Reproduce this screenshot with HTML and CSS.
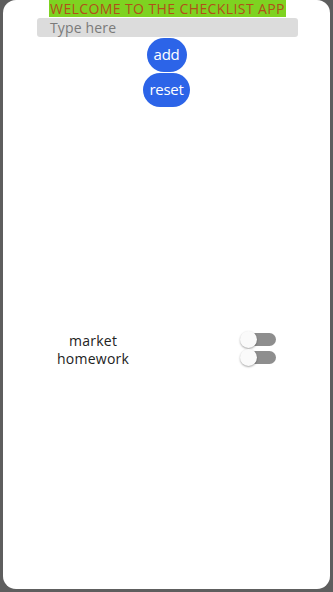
FILE: index.html
```html
<!DOCTYPE html>
<html>
<head>
<meta charset="utf-8">
<link rel="stylesheet" href="styles.css">
</head>
<body>
<div class="frame">
  <div class="card">
    <div class="title">WELCOME TO THE CHECKLIST APP</div>
    <div class="input">Type here</div>
    <div class="buttons">
      <div class="btn btn-add">add</div>
      <div class="btn btn-reset">reset</div>
    </div>
    <div class="list">
      <div class="rows">
        <div class="names">
          <div class="name">market</div>
          <div class="name">homework</div>
        </div>
        <div class="switches">
          <div class="switch"><div class="track"></div><div class="thumb"></div></div>
          <div class="switch"><div class="track"></div><div class="thumb"></div></div>
        </div>
      </div>
    </div>
  </div>
</div>
</body>
</html>
```
FILE: styles.css
```css
html, body {
  margin: 0;
  padding: 0;
  background: #5e5e5e;
}
.frame {
  width: 333px;
  height: 592px;
  padding: 0 3px 3px 3px;
  box-sizing: border-box;
  background: #5e5e5e;
}
.card {
  height: 589px;
  background: #ffffff;
  border-radius: 13px;
  display: flex;
  flex-direction: column;
  align-items: center;
  font-family: "Open Sans", "Noto Sans", sans-serif;
}
.title {
  background: #7ed321;
  color: #b0501a;
  font-size: 14px;
  line-height: 17px;
  padding: 0 1px;
  letter-spacing: 0.4px;
  white-space: nowrap;
  margin-left: 2px;
}
.input {
  margin-top: 1px;
  width: 261px;
  height: 19px;
  box-sizing: border-box;
  background: #dcdcdc;
  border-radius: 3px;
  padding-left: 13px;
  color: #7a7a7a;
  font-size: 14px;
  line-height: 19px;
  letter-spacing: 0.15px;
  margin-left: 2px;
}
.buttons {
  display: flex;
  flex-direction: column;
  align-items: center;
  margin-top: 1px;
}
.btn {
  background: #2c64e8;
  color: #ffffff;
  font-size: 15px;
  height: 34px;
  line-height: 33px;
  border-radius: 17px;
  text-align: center;
  letter-spacing: -0.3px;
}
.btn-add {
  width: 40px;
}
.btn-reset {
  width: 47px;
  margin-top: 1px;
}
.list {
  flex: 1;
  align-self: stretch;
  display: flex;
  flex-direction: column;
  justify-content: center;
}
.rows {
  display: flex;
  justify-content: space-around;
  align-items: flex-start;
}
.names {
  display: flex;
  flex-direction: column;
  align-items: center;
  padding-top: 3px;
}
.name {
  font-size: 14px;
  line-height: 18px;
  color: #222222;
  letter-spacing: 0.25px;
}
.switches {
  display: flex;
  flex-direction: column;
  gap: 1px;
  margin-left: 3px;
  padding-top: 2px;
}
.switch {
  position: relative;
  width: 36px;
  height: 17px;
}
.track {
  position: absolute;
  left: 4px;
  right: 0;
  top: 2px;
  height: 13px;
  border-radius: 6.5px;
  background: #8e8e8e;
}
.thumb {
  position: absolute;
  left: 0;
  top: 0;
  width: 17px;
  height: 17px;
  border-radius: 50%;
  background: #fafafa;
  box-shadow: 0 1px 2px rgba(0,0,0,0.35);
}
```
